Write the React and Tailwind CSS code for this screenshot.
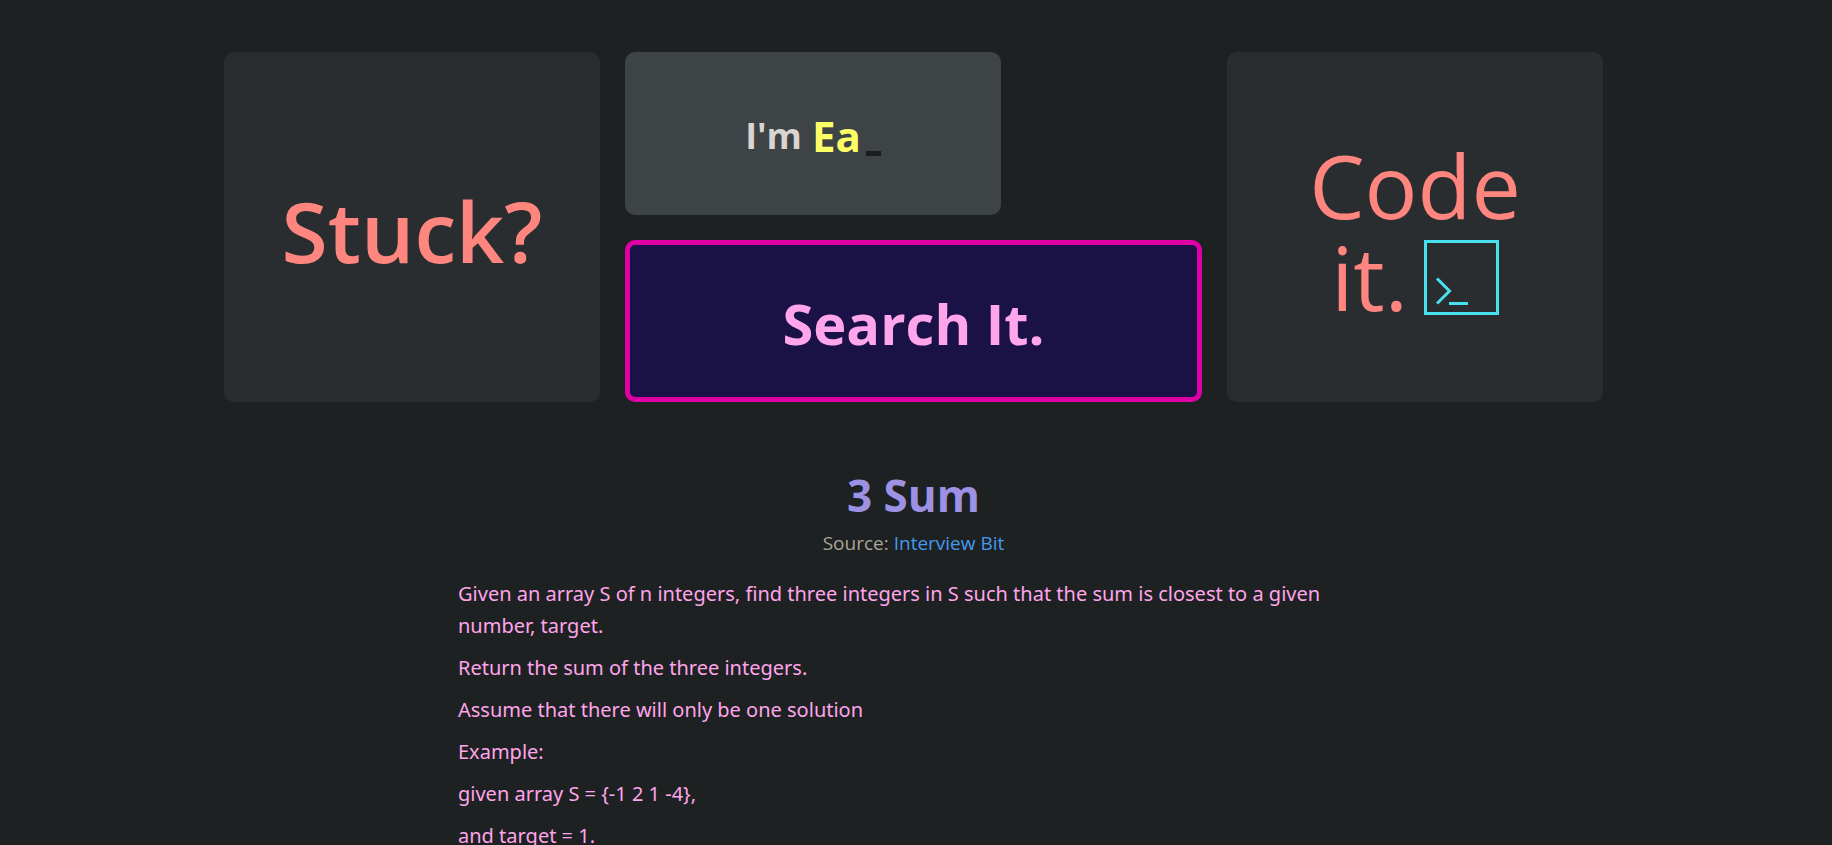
import React from "react";

const paragraphs = [
  "Given an array S of n integers, find three integers in S such that the sum is closest to a given number, target.",
  "Return the sum of the three integers.",
  "Assume that there will only be one solution",
  "Example:",
  "given array S = {-1 2 1 -4},",
  "and target = 1.",
];

function TerminalIcon() {
  return (
    <svg
      viewBox="0 0 75 75"
      className="size-[75px] shrink-0"
      fill="none"
      stroke="#48e0f0"
      strokeWidth="3"
      aria-hidden="true"
    >
      <rect x="1.5" y="1.5" width="72" height="72" />
      <path d="M13 38.5 25.5 51 13 63.5M25 63.5h19" />
    </svg>
  );
}

export default function App() {
  return (
    <main className="flex h-screen flex-col items-center overflow-hidden bg-[#1e2122] pt-[52px] pr-[5px] font-['Open_Sans','Noto_Sans',sans-serif]">
      <section className="grid w-full max-w-[1379px] shrink-0 grid-cols-[376fr_577fr_376fr] gap-[25px]">
        <div className="flex min-h-[350px] items-center justify-center rounded-[10px] bg-[#2a2d30] pt-2">
          <h1 className="text-[84px] leading-[92px] font-semibold text-[#ff857f]">Stuck?</h1>
        </div>

        <div className="grid grid-rows-[163fr_162fr] gap-[25px]">
          <div className="flex w-full max-w-[376px] items-center justify-center rounded-[10px] bg-[#3e4345] pt-1">
            <p className="flex items-center text-[36px] leading-[48px] font-bold text-[#d9d5d0]">
              I'm
              <span className="ml-[10px] text-[42px] text-[#fdff67]">Ea</span>
              <span className="mt-9 ml-[5px] h-[5px] w-[15px] bg-[#1a1c1d]" />
            </p>
          </div>
          <button
            type="button"
            className="rounded-[10px] border-[5px] border-[#de00a5] bg-[#1a1147] pt-1 text-[56px] leading-[72px] font-bold text-[#ffa5eb]"
          >
            Search It.
          </button>
        </div>

        <div className="flex flex-col items-center justify-center rounded-[10px] bg-[#2a2d30] pt-2 text-[88px] leading-[92px] text-[#ff857f]">
          <span>Code</span>
          <span className="flex items-center gap-4">
            it.
            <TerminalIcon />
          </span>
        </div>
      </section>

      <section className="mt-[64px] flex w-full max-w-[911px] flex-col">
        <h2 className="text-center text-[44px] leading-[58px] font-bold text-[#9d91e4]">3 Sum</h2>
        <p className="text-center text-[19px] leading-[38px] text-[#aba499]">
          Source:{" "}
          <a href="#interview-bit" className="text-[#4299ee]">
            Interview Bit
          </a>
        </p>
        <div className="mt-4 flex flex-col gap-[10px] font-['Noto_Sans',sans-serif] text-[20px] leading-[32px] text-[#ffa5eb]">
          {paragraphs.map((text) => (
            <p key={text}>{text}</p>
          ))}
        </div>
      </section>
    </main>
  );
}
